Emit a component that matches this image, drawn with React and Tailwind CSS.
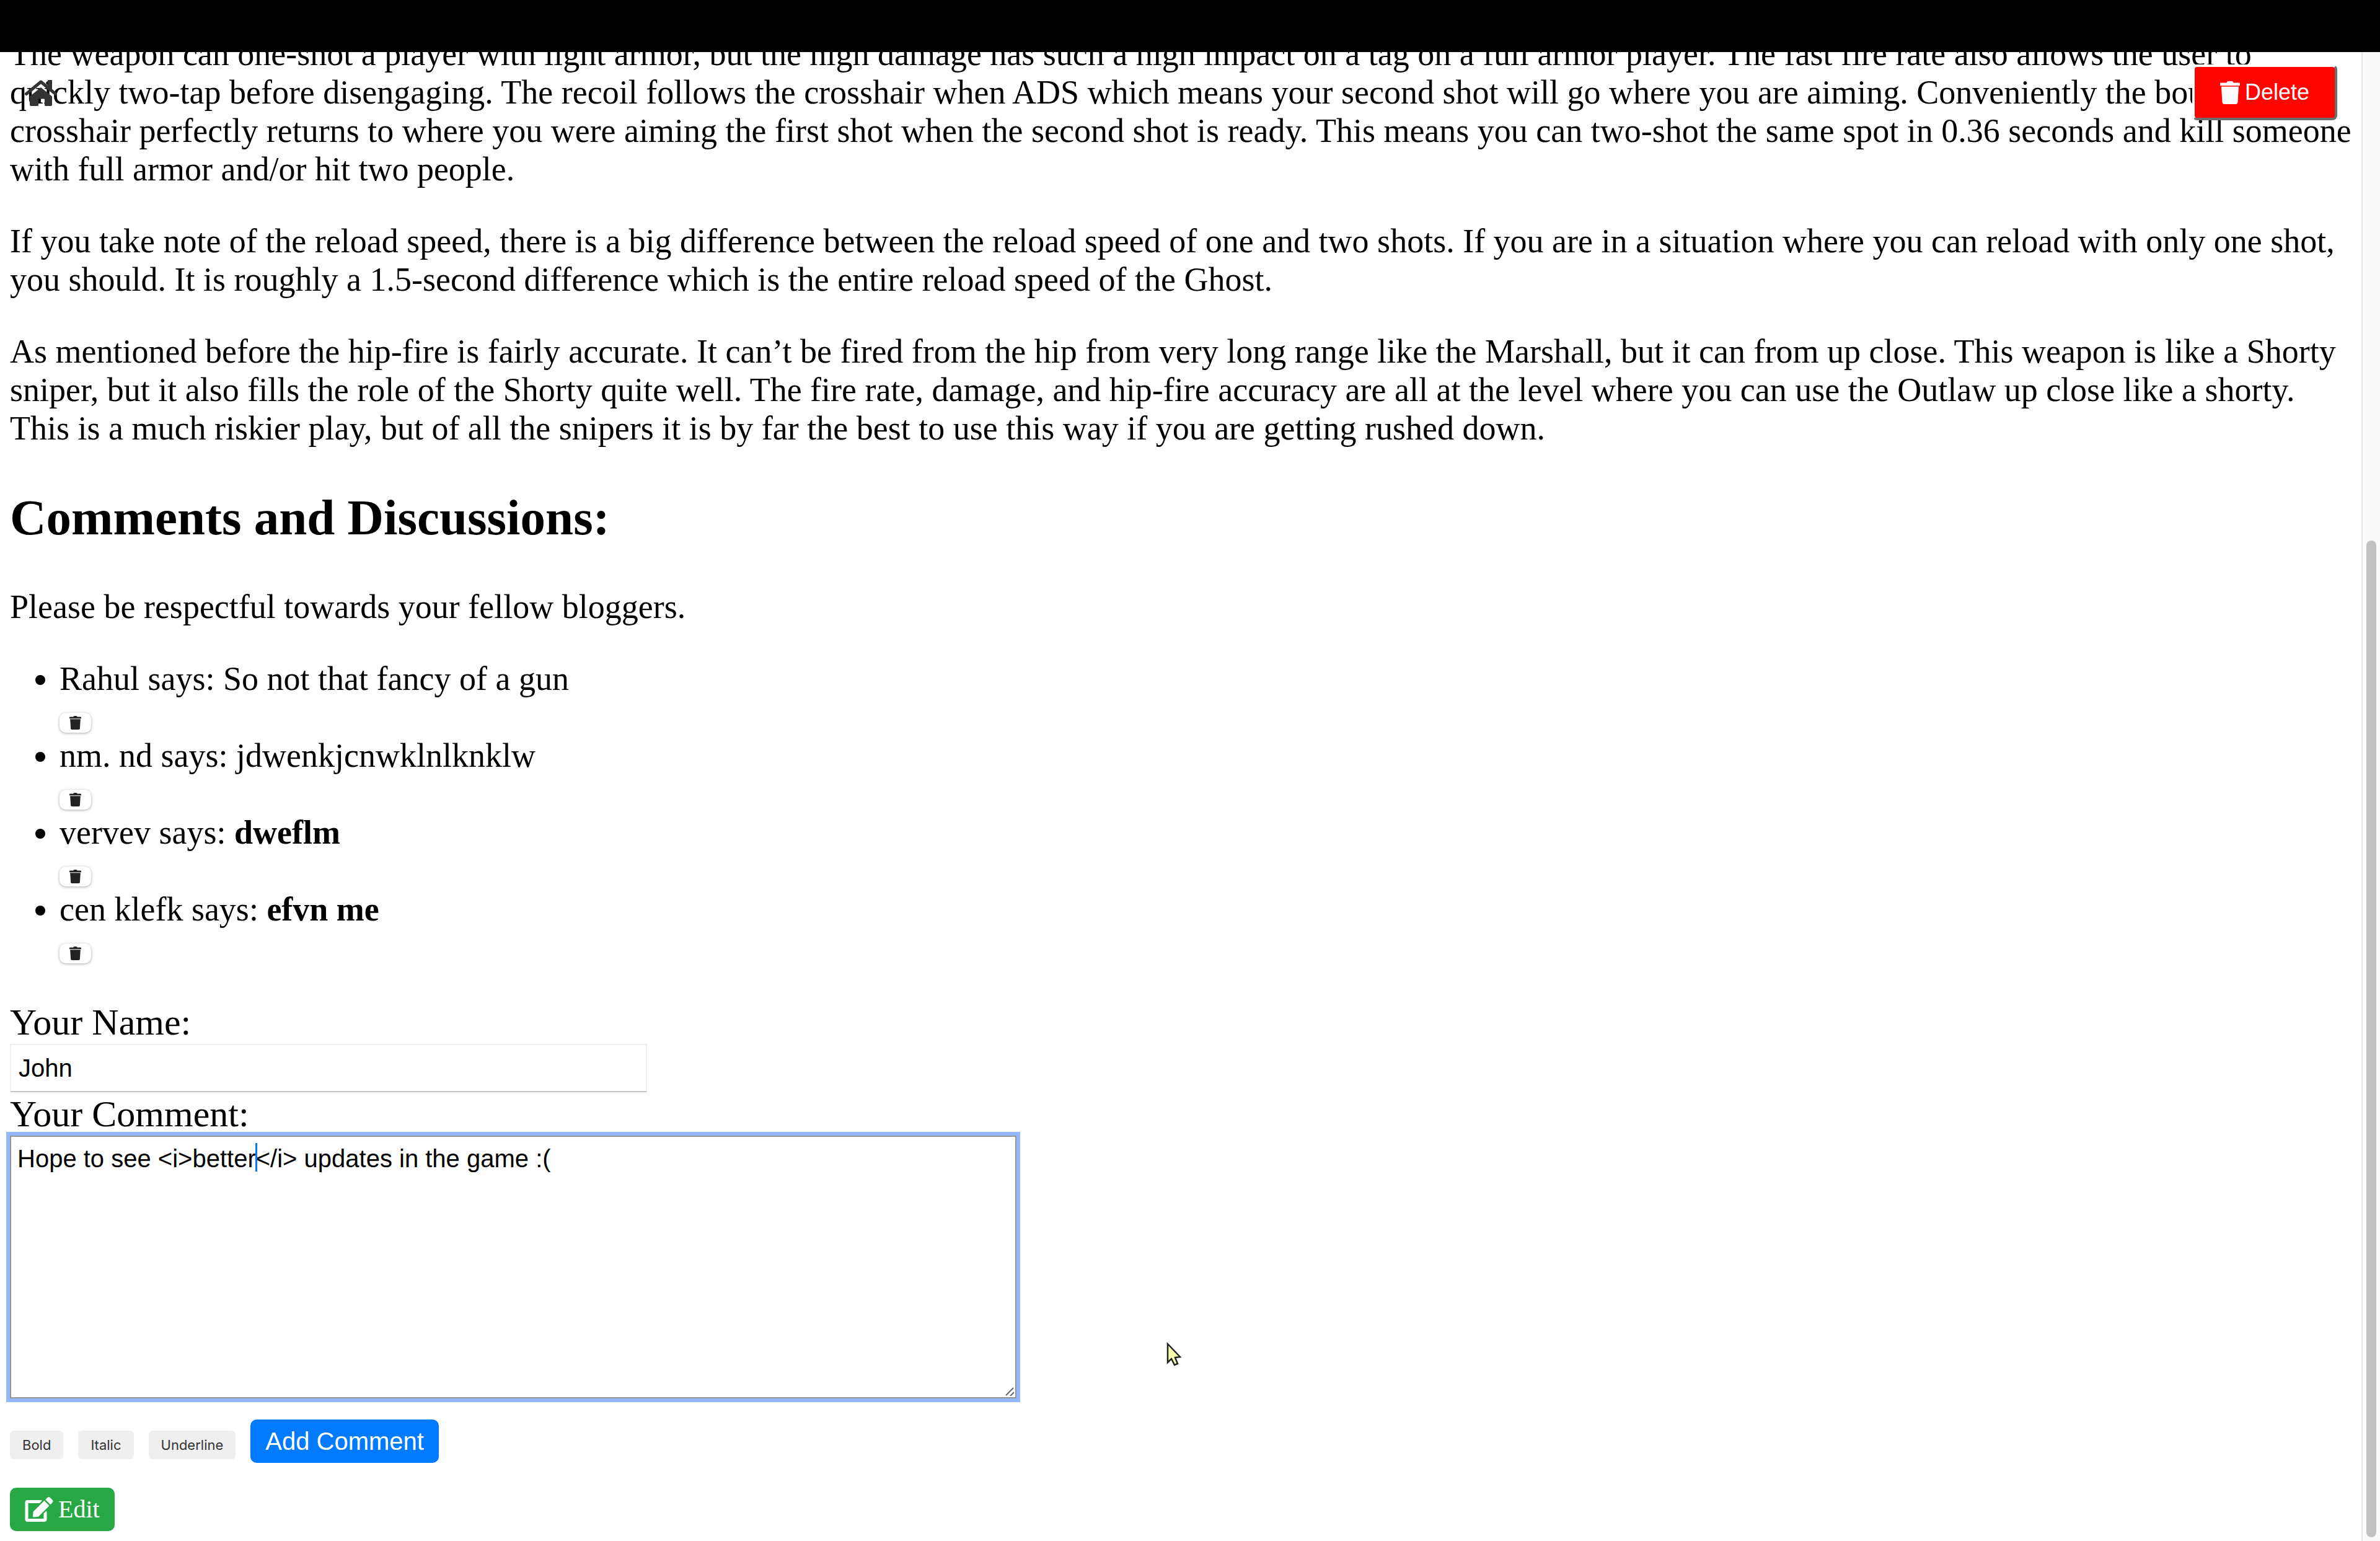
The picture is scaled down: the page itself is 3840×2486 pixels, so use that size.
import { FaEdit } from "react-icons/fa";

const comments = [
  { name: "Rahul", text: "So not that fancy of a gun" },
  { name: "nm. nd", text: "jdwenkjcnwklnlknklw" },
  { name: "vervev", text: "dweflm", bold: true },
  { name: "cen klefk", text: "efvn me", bold: true },
];

function TrashIcon({ className }) {
  return (
    <svg viewBox="0 0 32 37" className={className} fill="currentColor" aria-hidden="true">
      <path d="M1.500 2.500h9l.7-1.400c.4-.8 1-1.100 1.900-1.100h5.800c.9 0 1.500.3 1.900 1.100l.7 1.400h9c.9 0 1.500.5 1.500 1.200v2.600c0 .5-.4.9-1 .9H1c-.6 0-1-.4-1-.9V3.700c0-.7.6-1.200 1.500-1.200z" />
      <path d="M2 8.700h28l-1.500 25c-.1 2-1.500 3.300-3.500 3.300H7c-2 0-3.400-1.300-3.500-3.300z" />
    </svg>
  );
}

function HomeIcon({ className }) {
  return (
    <svg viewBox="0 0 52 42" className={className} fill="currentColor" aria-hidden="true">
      <rect x="37" y="0" width="7" height="16" rx="1" />
      <path d="M2.500 22.500 26 3l23.500 19.500" fill="none" stroke="currentColor" strokeWidth="5" strokeLinecap="round" strokeLinejoin="round" />
      <path d="M8 26.500 26 12l18 14.500V40c0 1.200-.8 2-2 2h-8.500c-1 0-1.500-.6-1.500-1.500V32c0-1-.6-1.500-1.500-1.500h-7c-1 0-1.500.6-1.500 1.500v8.500c0 1-.5 1.500-1.500 1.500H10c-1.200 0-2-.8-2-2z" />
    </svg>
  );
}

function FormatButton({ children }) {
  return (
    <button type="button" className="rounded-md bg-[#efefef] px-5 font-[Inter,sans-serif] text-[22px] leading-[46px] text-[#333]">
      {children}
    </button>
  );
}

export default function App() {
  return (
    <div className="flex h-screen flex-col overflow-hidden bg-white font-['Liberation_Serif','Times_New_Roman',serif] text-[54px] leading-[62px] text-black">
      <header className="h-[84px] shrink-0 bg-black" />
      <div className="relative flex min-h-0 flex-1">
        <main className="flex min-w-0 flex-1 flex-col justify-end overflow-hidden px-4 pb-4">
          <p className="mb-[54px]">
            The weapon can one-shot a player with light armor, but the high damage has such a high impact on a tag on a full armor player. The fast fire rate also allows the user to quickly two-tap before disengaging. The recoil follows the crosshair when ADS which means your second shot will go where you are aiming. Conveniently the bounce of the crosshair perfectly returns to where you were aiming the first shot when the second shot is ready. This means you can two-shot the same spot in 0.36 seconds and kill someone with full armor and/or hit two people.
          </p>
          <p className="mb-[54px]">
            If you take note of the reload speed, there is a big difference between the reload speed of one and two shots. If you are in a situation where you can reload with only one shot, you should. It is roughly a 1.5-second difference which is the entire reload speed of the Ghost.
          </p>
          <p>
            As mentioned before the hip-fire is fairly accurate. It can’t be fired from the hip from very long range like the Marshall, but it can from up close. This weapon is like a Shorty sniper, but it also fills the role of the Shorty quite well. The fire rate, damage, and hip-fire accuracy are all at the level where you can use the Outlaw up close like a shorty. This is a much riskier play, but of all the snipers it is by far the best to use this way if you are getting rushed down.
          </p>
          <h2 className="my-[66px] text-[81px] leading-[94px] font-bold">Comments and Discussions:</h2>
          <p className="mb-[54px]">Please be respectful towards your fellow bloggers.</p>
          <ul className="mb-[54px] list-disc pl-20">
            {comments.map((c) => (
              <li key={c.name}>
                {c.name} says: {c.bold ? <b>{c.text}</b> : c.text}
                <div className="flex h-[62px] items-start pt-6">
                  <button
                    type="button"
                    aria-label={`Delete comment by ${c.name}`}
                    className="flex h-8 w-[51px] items-center justify-center rounded-[10px] bg-white text-[#222] shadow-[0_1px_4px_rgba(0,0,0,0.35)]"
                  >
                    <TrashIcon className="h-[22px] w-[19px]" />
                  </button>
                </div>
              </li>
            ))}
          </ul>
          <form className="flex flex-col items-start" onSubmit={(e) => e.preventDefault()}>
            <label htmlFor="name" className="text-[60px] leading-[70px]">Your Name:</label>
            <input
              id="name"
              type="text"
              defaultValue="John"
              className="h-[78px] w-[1028px] border-2 border-[#efefef] border-b-[#c4c4c4] bg-white px-3 font-['Liberation_Sans',Arial,sans-serif] text-[40px] outline-none"
            />
            <label htmlFor="comment" className="text-[60px] leading-[70px]">Your Comment:</label>
            <div className="relative">
              <textarea
                id="comment"
                defaultValue="Hope to see <i>better</i> updates in the game :("
                className="block h-[424px] w-[1624px] resize-none border-2 border-[#949494] bg-white px-2.5 py-3 font-['Liberation_Sans',Arial,sans-serif] text-[40px] leading-[46px] ring-6 ring-[#93b8fb] outline-none"
              />
              <span className="absolute top-3 left-[396px] h-[46px] w-[3px] bg-[#007aff]" />
              <svg className="absolute right-1 bottom-1 h-[14px] w-[14px]" viewBox="0 0 14 14" stroke="#666" strokeWidth="2" aria-hidden="true">
                <path d="M1 13 13 1M8 14l6-6" />
              </svg>
            </div>
            <div className="mt-[34px] flex items-baseline gap-6">
              <FormatButton>Bold</FormatButton>
              <FormatButton>Italic</FormatButton>
              <FormatButton>Underline</FormatButton>
              <button type="submit" className="rounded-[10px] bg-[#007bff] px-6 font-['Liberation_Sans',Arial,sans-serif] text-[40px] leading-[70px] text-white">
                Add Comment
              </button>
            </div>
          </form>
          <a href="#edit" className="mt-10 flex h-[70px] shrink-0 items-center gap-2 self-start rounded-[10px] bg-[#28a745] px-6 text-[40px] text-white">
            <FaEdit className="h-10 w-[46px]" />
            Edit
          </a>
        </main>
        <div className="flex w-[30px] shrink-0 flex-col items-center border-l-2 border-[#e4e4e4] bg-[#fafafa] pt-[788px] pb-1.5" aria-hidden="true">
          <div className="w-4 flex-1 rounded-full bg-[#c2c2c2]" />
        </div>
        <a href="#home" aria-label="Home" className="absolute top-[45px] left-10 text-[#333]">
          <HomeIcon className="h-[42px] w-[52px]" />
        </a>
        <button
          type="button"
          className="absolute top-5 right-[69px] flex h-[90px] w-[234px] items-center justify-center gap-2 rounded-lg border-4 border-t-white border-r-[#6e6e6e] border-b-[#6e6e6e] border-l-white bg-[#ff0400] font-['Liberation_Sans',Arial,sans-serif] text-[36px] text-white"
        >
          <TrashIcon className="h-[37px] w-8" />
          Delete
        </button>
        <svg className="absolute top-[2080px] left-[1880px] h-10 w-7" viewBox="0 0 28 40" aria-hidden="true">
          <path d="M4 4v30l6-6 5 10 5-2-4-10 8-1z" fill="#f5fcae" stroke="#222" strokeWidth="2.500" />
        </svg>
      </div>
    </div>
  );
}
